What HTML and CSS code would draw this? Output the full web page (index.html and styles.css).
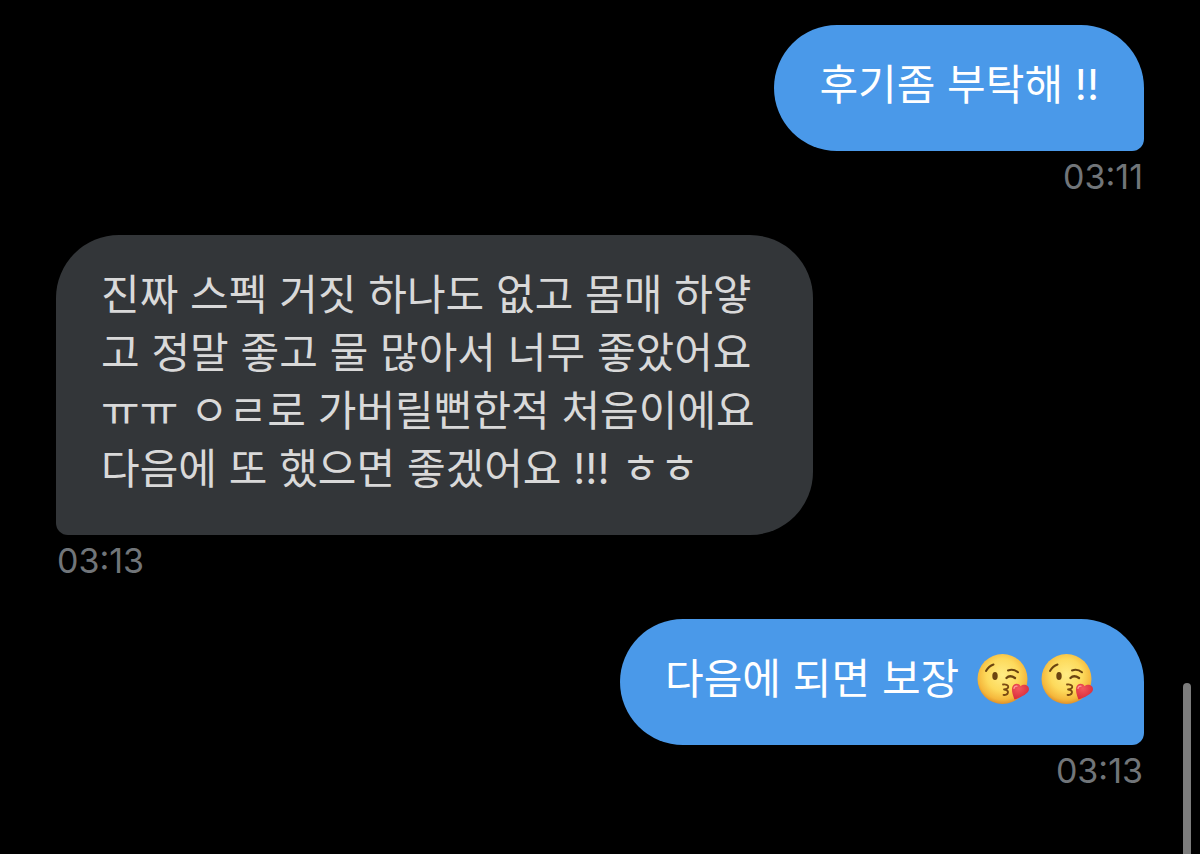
FILE: index.html
```html
<!DOCTYPE html>
<html lang="ko">
<head>
    <meta charset="UTF-8">
    <meta name="viewport" content="width=device-width, initial-scale=1.0">
    <title>메시지</title>
    <link rel="stylesheet" href="styles.css">
</head>
<body>
    <!-- Emoji artwork, reused by the messages below -->
    <svg class="defs" aria-hidden="true">
        <defs>
            <radialGradient id="face" cx="0.5" cy="0.42" r="0.58">
                <stop offset="0" stop-color="#ffec85"/>
                <stop offset="0.55" stop-color="#fdda5c"/>
                <stop offset="0.85" stop-color="#f5b83c"/>
                <stop offset="1" stop-color="#e0912a"/>
            </radialGradient>
            <radialGradient id="heart" cx="0.4" cy="0.3" r="0.7">
                <stop offset="0" stop-color="#f2585c"/>
                <stop offset="1" stop-color="#d92b3a"/>
            </radialGradient>
            <symbol id="kiss" viewBox="0 0 52 52">
                <circle cx="25.5" cy="26" r="25" fill="url(#face)"/>
                <path d="M9 18C11 14.500 13.500 12.500 16.500 11.500" fill="none" stroke="#6b4410" stroke-width="2" stroke-linecap="round"/>
                <path d="M31 17.500C34 16.300 38 16.800 41 19.300" fill="none" stroke="#6b4410" stroke-width="2" stroke-linecap="round"/>
                <ellipse cx="18" cy="23" rx="2.700" ry="4" fill="#6b4410"/>
                <path d="M29.500 25C31.500 23 35 23 38 25" fill="none" stroke="#6b4410" stroke-width="2.400" stroke-linecap="round"/>
                <path d="M26 31.500C28.500 31 31.500 32 31.300 34C31.100 35.800 28.500 36.300 27 36.500C29 36.800 31.300 37.500 31 39.500C30.700 41.600 28 42.300 26.500 41.800" fill="none" stroke="#7a4a12" stroke-width="1.800" stroke-linecap="round" stroke-linejoin="round"/>
                <path d="M37.500 46.500C35.500 41.500 34.500 37.500 35.200 34.500C36 30.500 41.500 29.300 43.600 33.300C46.500 30.300 52 32 52 36.300C52 40.700 43 44.800 37.500 46.500Z" fill="url(#heart)"/>
                <path d="M37 35.500C37.300 33.800 38.500 33 40 33.200" fill="none" stroke="#ff9a9a" stroke-width="1.200" stroke-linecap="round"/>
            </symbol>
        </defs>
    </svg>

    <main class="chat">
        <div class="message sent">
            <p class="bubble">후기좀 부탁해 !!</p>
            <time class="time" datetime="03:11">03:11</time>
        </div>

        <div class="message received">
            <p class="bubble">진짜 스펙 거짓 하나도 없고 몸매 하얗고 정말 좋고 물 많아서 너무 좋았어요ㅠㅠ ㅇㄹ로 가버릴뻔한적 처음이에요 다음에 또 했으면 좋겠어요 !!! ㅎㅎ</p>
            <time class="time" datetime="03:13">03:13</time>
        </div>

        <div class="message sent">
            <p class="bubble">다음에 되면 보장 <svg class="emoji" role="img" aria-label="😘"><use href="#kiss"/></svg><svg class="emoji" role="img" aria-label="😘"><use href="#kiss"/></svg></p>
            <time class="time" datetime="03:13">03:13</time>
        </div>
    </main>

    <div class="scrollbar"></div>
</body>
</html>
```

FILE: styles.css
```css
* {
    margin: 0;
    padding: 0;
    box-sizing: border-box;
}

body {
    font-family: Inter, 'Noto Sans CJK KR', sans-serif;
    background: #000;
    color: #fff;
}

.defs {
    position: absolute;
    width: 0;
    height: 0;
}

.chat {
    display: flex;
    flex-direction: column;
    gap: 38px;
    padding: 25px 56px;
}

.message {
    display: flex;
    flex-direction: column;
    align-items: flex-start;
    gap: 6px;
}

.sent {
    align-items: flex-end;
}

.bubble {
    max-width: 757px;
    padding: 31px 45px 37px;
    border-radius: 63px;
    font-size: 42px;
    line-height: 58px;
}

.sent .bubble {
    background: #4a99e9;
    border-bottom-right-radius: 12px;
}

.received .bubble {
    background: #333639;
    color: #d9d9d9;
    border-bottom-left-radius: 12px;
}

.time {
    padding: 0 1px;
    color: #717579;
    font-size: 34px;
    line-height: 40px;
}

.emoji {
    width: 52px;
    height: 52px;
    margin: 0 6px;
    vertical-align: -11px;
}

.scrollbar {
    position: fixed;
    right: 9px;
    top: 80%;
    bottom: -8px;
    width: 8px;
    border-radius: 4px;
    background: #7c7c7c;
}
```
